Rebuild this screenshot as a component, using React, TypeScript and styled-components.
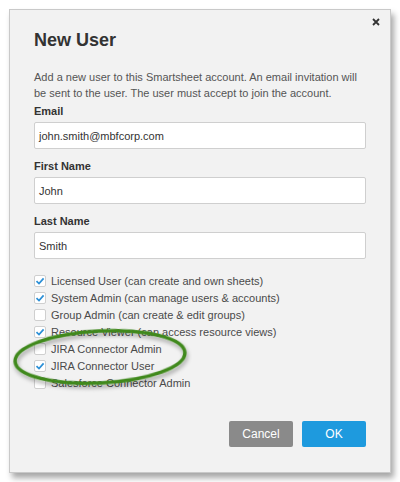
import styled, { createGlobalStyle } from "styled-components";

const GlobalStyle = createGlobalStyle`
  html, body {
    margin: 0;
    padding: 0;
    background: #fff;
  }
  body {
    font-family: "Liberation Sans", Arial, sans-serif;
  }
`;

const Page = styled.div`
  padding: 9px 0 0 9px;
  width: 400px;
  height: 482px;
  box-sizing: border-box;
`;

const Dialog = styled.div`
  position: relative;
  width: 382px;
  height: 464px;
  box-sizing: border-box;
  background: #f2f2f2;
  border: 1px solid #c9c9c9;
  box-shadow: 3px 5px 6px rgba(0, 0, 0, 0.35);
  display: flex;
  flex-direction: column;
  padding: 0 24px 25px 24px;
`;

const CloseRow = styled.div`
  display: flex;
  justify-content: flex-end;
  margin: 8px -14px 0 0;
  height: 8px;
`;

const CloseButton = styled.button`
  border: 0;
  padding: 0;
  background: none;
  width: 8px;
  height: 8px;
  display: flex;
  cursor: pointer;
`;

const Title = styled.h1`
  margin: 3px 0 0 0;
  font-size: 18px;
  line-height: 22px;
  font-weight: 700;
  color: #333;
`;

const Intro = styled.p`
  margin: 18px 0 0 0;
  font-size: 11px;
  line-height: 16px;
  color: #555;
`;

const Field = styled.div<{ $first?: boolean }>`
  display: flex;
  flex-direction: column;
  row-gap: 4px;
  margin-top: ${(p) => (p.$first ? "3px" : "10px")};
`;

const Label = styled.label`
  font-size: 11px;
  line-height: 14px;
  font-weight: 700;
  color: #333;
`;

const Input = styled.div`
  height: 27px;
  box-sizing: border-box;
  background: #fff;
  border: 1px solid #cfcfcf;
  border-radius: 2px;
  padding: 0 4px;
  display: flex;
  align-items: center;
  font-size: 11px;
  color: #333;
`;

const Options = styled.div`
  display: flex;
  flex-direction: column;
  margin-top: 13px;
`;

const Option = styled.div`
  display: flex;
  align-items: center;
  column-gap: 5px;
  height: 17px;
  font-size: 11px;
  color: #4a4a4a;
`;

const Box = styled.span`
  width: 12px;
  height: 12px;
  box-sizing: border-box;
  background: #fff;
  border: 1px solid #cfcfcf;
  border-radius: 2px;
  display: flex;
  align-items: center;
  justify-content: center;
`;

const Footer = styled.div`
  margin-top: auto;
  display: flex;
  justify-content: flex-end;
  column-gap: 9px;
`;

const Button = styled.button<{ $primary?: boolean }>`
  width: 64px;
  height: 26px;
  border: 0;
  border-radius: 2px;
  background: ${(p) => (p.$primary ? "#1e9ade" : "#8a8a8a")};
  color: #fff;
  font-family: "Liberation Sans", Arial, sans-serif;
  font-size: 12px;
  cursor: pointer;
`;

const Annotation = styled.svg`
  position: absolute;
  left: 0;
  top: 0;
  pointer-events: none;
`;

const options = [
  { text: "Licensed User (can create and own sheets)", checked: true },
  { text: "System Admin (can manage users & accounts)", checked: true },
  { text: "Group Admin (can create & edit groups)", checked: false },
  { text: "Resource Viewer (can access resource views)", checked: true },
  { text: "JIRA Connector Admin", checked: false },
  { text: "JIRA Connector User", checked: true },
  { text: "Salesforce Connector Admin", checked: false },
];

const Check = () => (
  <svg width="10" height="10" viewBox="0 0 10 10">
    <path d="M1.5 5.2 L4 7.6 L8.6 2.4" fill="none" stroke="#2b8fd6" strokeWidth="1.7" />
  </svg>
);

export default function App() {
  return (
    <>
      <GlobalStyle />
      <Page>
        <Dialog>
          <CloseRow>
            <CloseButton aria-label="Close">
              <svg width="8" height="8" viewBox="0 0 8 8">
                <path d="M1 1 L7 7 M7 1 L1 7" stroke="#333" strokeWidth="1.8" />
              </svg>
            </CloseButton>
          </CloseRow>
          <Title>New User</Title>
          <Intro>
            Add a new user to this Smartsheet account. An email invitation will be sent to the user. The
            user must accept to join the account.
          </Intro>
          <Field $first>
            <Label>Email</Label>
            <Input>john.smith@mbfcorp.com</Input>
          </Field>
          <Field>
            <Label>First Name</Label>
            <Input>John</Input>
          </Field>
          <Field>
            <Label>Last Name</Label>
            <Input>Smith</Input>
          </Field>
          <Options>
            {options.map((o) => (
              <Option key={o.text}>
                <Box>{o.checked && <Check />}</Box>
                {o.text}
              </Option>
            ))}
          </Options>
          <Footer>
            <Button>Cancel</Button>
            <Button $primary>OK</Button>
          </Footer>
          <Annotation width="382" height="464" viewBox="0 0 382 464">
            <defs>
              <filter id="sh" x="-20%" y="-40%" width="140%" height="180%">
                <feDropShadow dx="1" dy="3" stdDeviation="2" floodColor="#000" floodOpacity="0.35" />
              </filter>
            </defs>
            <ellipse
              cx="90"
              cy="347"
              rx="85"
              ry="26"
              transform="rotate(-3 90 347)"
              fill="none"
              stroke="#40891f"
              strokeWidth="3.5"
              filter="url(#sh)"
            />
          </Annotation>
        </Dialog>
      </Page>
    </>
  );
}
